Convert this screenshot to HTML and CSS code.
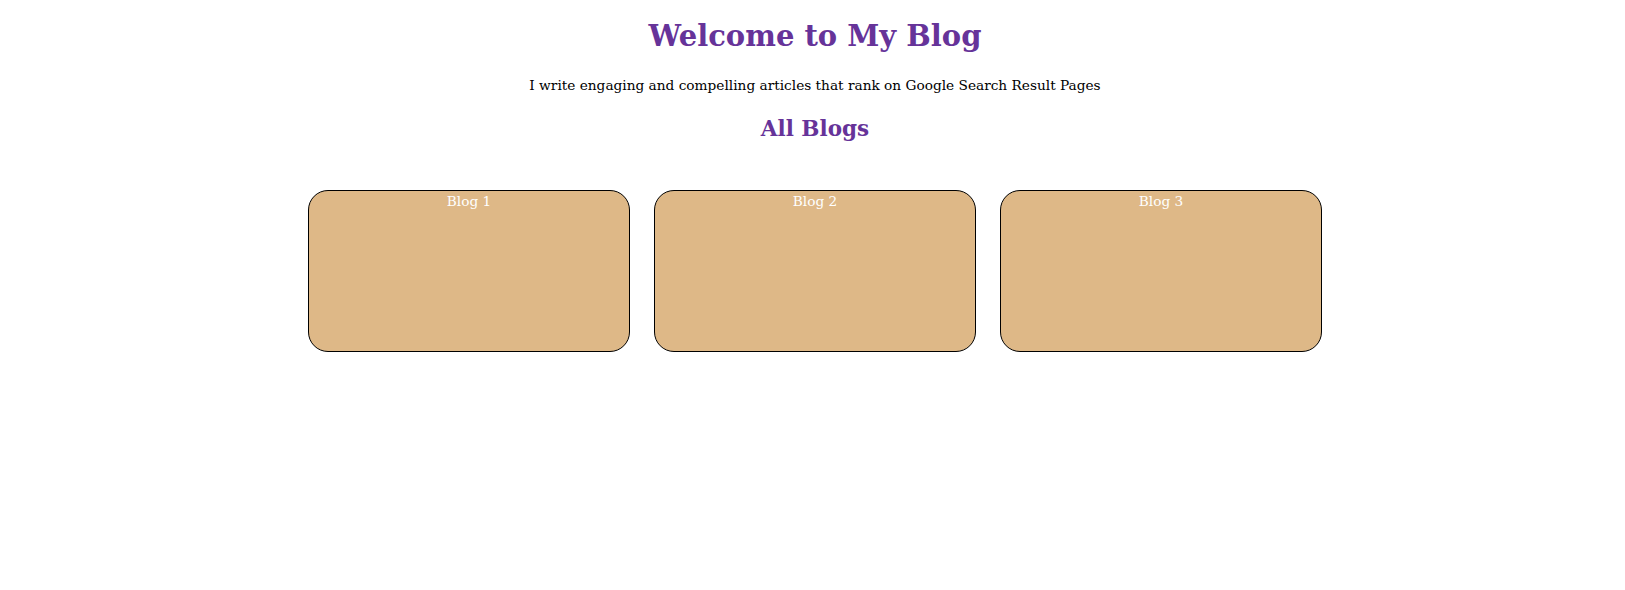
FILE: index.html
```html
<!DOCTYPE html>
<html lang="en">
<head>
<meta charset="utf-8">
<title>My Blog</title>
<link rel="stylesheet" href="styles.css">
</head>
<body>
  <header class="header">
    <h1 class="title">Welcome to My Blog</h1>
    <p class="tagline">I write engaging and compelling articles that rank on Google Search Result Pages</p>
    <h2 class="section-title">All Blogs</h2>
  </header>
  <main class="blog-list">
    <div class="blog-card">Blog 1</div>
    <div class="blog-card">Blog 2</div>
    <div class="blog-card">Blog 3</div>
  </main>
</body>
</html>
```

FILE: styles.css
```css
html, body {
  margin: 0;
  padding: 0;
  background: #ffffff;
}

body {
  padding-left: 5px;
  font-family: "DejaVu Serif", "Liberation Serif", serif;
  color: #000000;
}

.header {
  text-align: center;
}

.title {
  margin: 19px 0 0;
  font-size: 29px;
  line-height: 34px;
  font-weight: bold;
  color: #663399;
}

.tagline {
  margin: 23.3px 0 0;
  font-size: 13.7px;
  line-height: 18px;
}

.section-title {
  margin: 21.3px 0 0;
  font-size: 21.5px;
  line-height: 26px;
  font-weight: bold;
  color: #663399;
}

.blog-list {
  display: flex;
  justify-content: center;
  gap: 24px;
  margin-top: 48.4px;
}

.blog-card {
  box-sizing: border-box;
  width: 322px;
  height: 162px;
  padding-top: 1px;
  border: 1px solid #000000;
  border-radius: 20px;
  background: #deb887;
  color: #ffffff;
  text-align: center;
  font-size: 13.7px;
  line-height: 18px;
}
```
